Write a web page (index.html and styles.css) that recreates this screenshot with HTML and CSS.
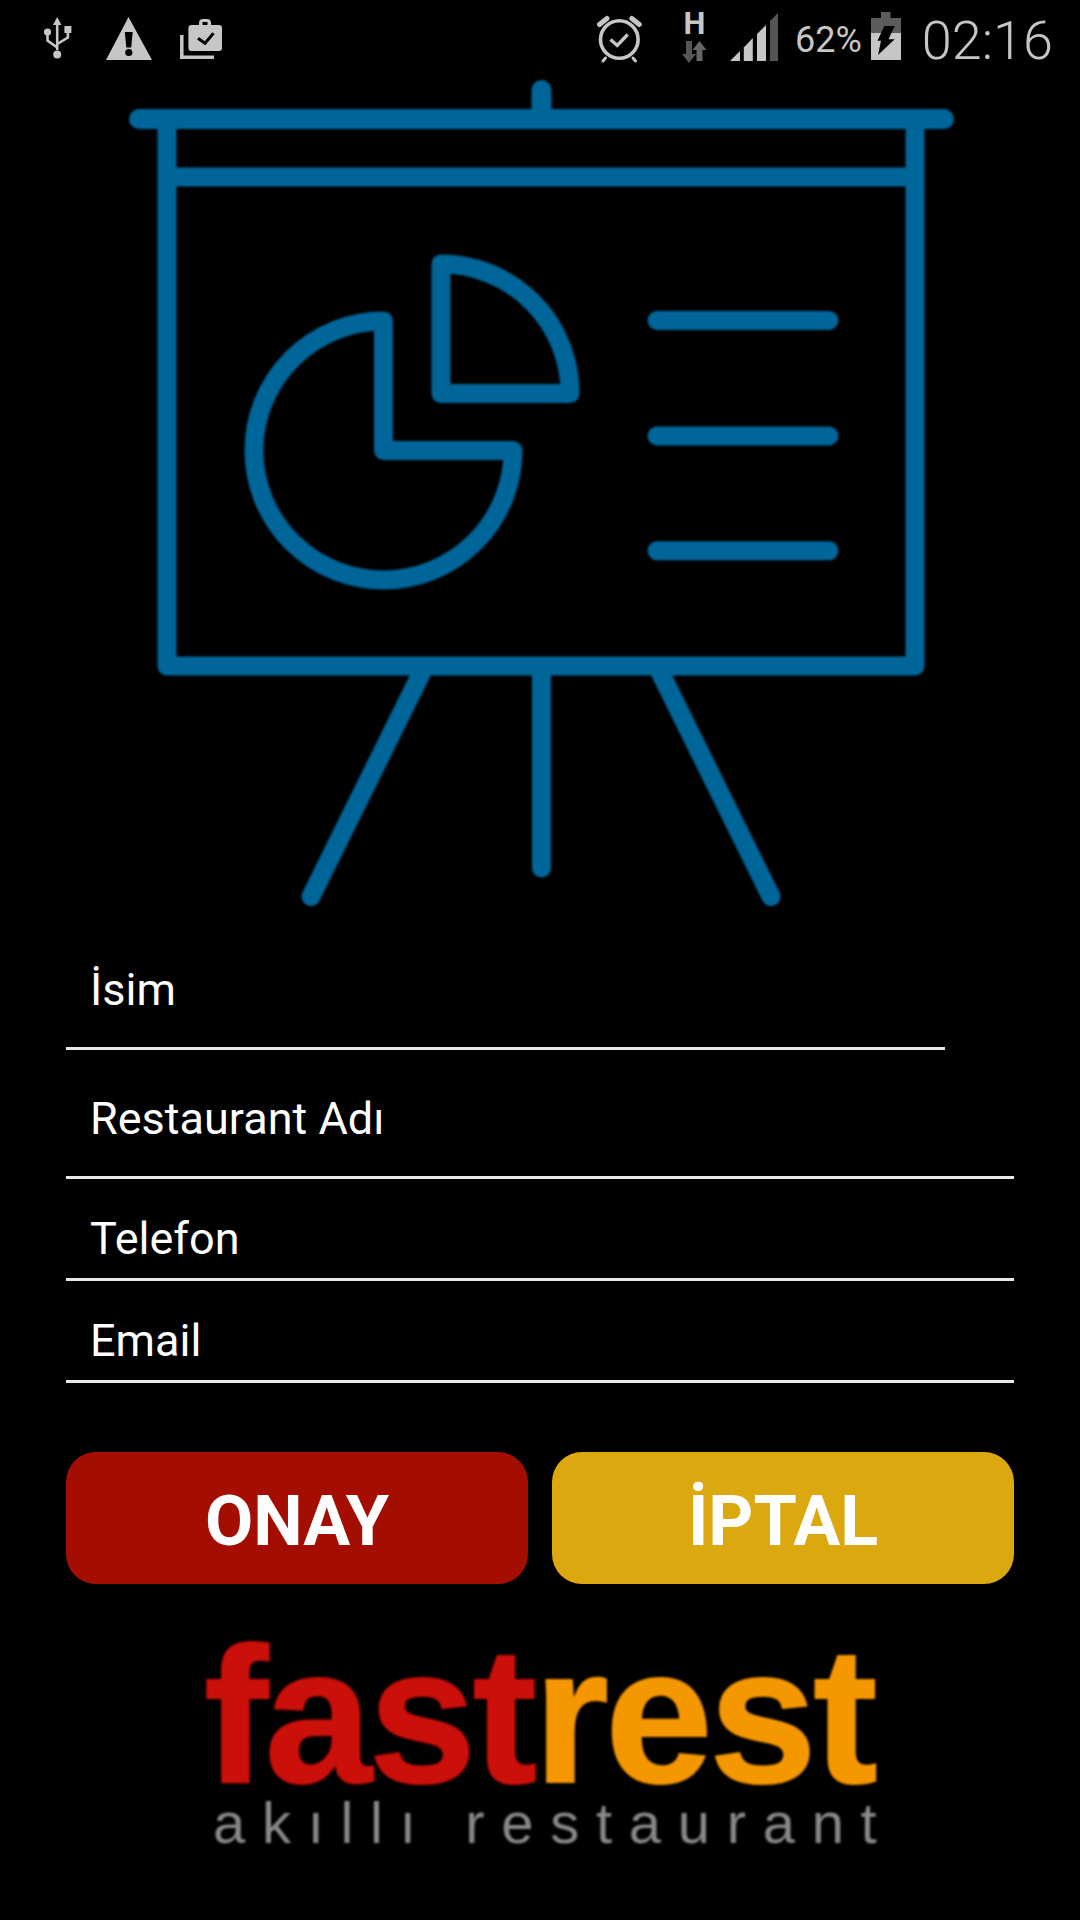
FILE: index.html
```html
<!DOCTYPE html>
<html lang="tr">
<head>
    <meta charset="UTF-8">
    <meta name="viewport" content="width=device-width, initial-scale=1.0">
    <title>fastrest</title>
    <link rel="stylesheet" href="styles.css">
</head>
<body>
    <div class="status-bar">
        <div class="status-group">
            <!-- usb -->
            <svg class="icon icon-usb" viewBox="44 0 28 78">
                <path d="M57.2 17l4.2 8h-2.9v25h-2.6V25H53z"/>
                <circle cx="57.2" cy="54.5" r="4"/>
                <circle cx="47.5" cy="32" r="3.6"/>
                <rect x="64.4" y="26" width="7" height="7"/>
                <path class="thin" d="M47.5 34v6.5l9.7 7M67.9 32v5.5l-10.7 6.5"/>
            </svg>
            <!-- warning -->
            <svg class="icon icon-warning" viewBox="106 0 46 78">
                <path d="M128.5 17L152 60H106z"/>
                <path class="cut" d="M124.8 32h7.9l-1.5 15.5h-4.9z"/>
                <circle class="cut" cx="128.8" cy="52.5" r="3.6"/>
            </svg>
            <!-- job bag -->
            <svg class="icon icon-bag" viewBox="180 0 42 78">
                <path d="M188.4 28a3 3 0 0 1 3-3h7.6v-2a4 4 0 0 1 4-4h4a4 4 0 0 1 4 4v2h8a3 3 0 0 1 3 3v20a3 3 0 0 1-3 3h-27.6a3 3 0 0 1-3-3z"/>
                <rect class="cut" x="202.5" y="22" width="5" height="3"/>
                <path class="check" d="M198 38.3l7 5 8.5-10"/>
                <path class="back" d="M181.8 35v22.2H214"/>
            </svg>
        </div>
        <div class="status-group status-right">
            <!-- alarm -->
            <svg class="icon icon-alarm" viewBox="597 0 45 78">
                <circle class="ring" cx="619.3" cy="39.5" r="18.8"/>
                <path class="ear" d="M599.5 24.5l7.5-6M639.3 24.5l-7.5-6"/>
                <path class="ear-thin" d="M605.5 58l-2.5 3M633 58l2.5 3"/>
                <path class="alarm-check" d="M610.5 39.5l6.7 6 10.5-11"/>
            </svg>
            <!-- network type -->
            <svg class="icon icon-net" viewBox="682 0 27 78">
                <text class="net-letter" x="683.5" y="34">H</text>
                <path class="arrow-down" d="M686 41h6v13h4l-7 9-7-9h4z"/>
                <path class="arrow-up" d="M699.5 41l7 9h-4v11h-6V50h-4z"/>
            </svg>
            <!-- signal -->
            <svg class="icon icon-signal" viewBox="730 0 48 78">
                <path d="M730 61l10-10v10z"/>
                <path d="M743.8 47.5l9-9.5v23h-9z"/>
                <path d="M757 34l9-9v36h-9z"/>
                <path class="signal-off" d="M770 21l8-8v48h-8z"/>
            </svg>
            <span class="battery-text">62%</span>
            <!-- battery charging -->
            <svg class="icon icon-battery" viewBox="871 0 30 78">
                <path class="battery-off" d="M881 12h9.5v6H901v15h-30V18h10z"/>
                <rect x="871" y="33" width="30" height="27"/>
                <path class="cut" d="M884.4 26h10.3l-6.2 13.3h6.2L878 55l3-14.3h-3.5z"/>
            </svg>
            <span class="clock">02:16</span>
        </div>
    </div>

    <!-- presentation board -->
    <svg class="board" viewBox="0 78 1080 842">
        <g class="board-lines">
            <path class="heavy" d="M139 119H944M541.5 90V119"/>
            <path d="M167 119V666H915V119M167 177H915"/>
            <path d="M383.5 321V450.5H513A129.5 129.5 0 1 1 383.5 321Z"/>
            <path d="M441 264V393.6H570A129 129 0 0 0 441 264Z"/>
            <path d="M657 320.4H829M657 435.9H829M657 550.8H829"/>
            <path d="M421 674L311 896.5M541.5 674V868M661 674L771 896.5"/>
        </g>
    </svg>

    <div class="form">
        <div class="field field-tall field-first"><span>İsim</span></div>
        <div class="field field-tall"><span>Restaurant Adı</span></div>
        <div class="field field-short"><span>Telefon</span></div>
        <div class="field field-short"><span>Email</span></div>

        <div class="actions">
            <button class="btn btn-ok">ONAY</button>
            <button class="btn btn-cancel">İPTAL</button>
        </div>
    </div>

    <div class="logo">
        <div class="logo-name"><span class="logo-fast">fast</span><span class="logo-rest">rest</span></div>
        <div class="logo-tag">akıllı restaurant</div>
    </div>
</body>
</html>
```

FILE: styles.css
```css
html, body {
    margin: 0;
    padding: 0;
}
body {
    width: 1080px;
    height: 1920px;
    overflow: hidden;
    background-color: #000;
    color: #fff;
    font-family: 'Roboto', sans-serif;
}

/* status bar */
.status-bar {
    display: flex;
    justify-content: space-between;
    height: 78px;
    padding: 0 27px 0 44px;
}
.status-group {
    display: flex;
    height: 78px;
}
.icon {
    display: block;
    height: 78px;
    flex: none;
    fill: #c6c6c6;
}
.icon-usb { width: 28px; }
.icon-warning { width: 46px; margin-left: 34px; }
.icon-bag { width: 42px; margin-left: 28px; }
.icon-alarm { width: 45px; }
.icon-net { width: 27px; margin-left: 40px; }
.icon-signal { width: 48px; margin-left: 21px; }
.icon-battery { width: 30px; margin-left: 9px; }
.cut { fill: #000; }
.thin { fill: none; stroke: #c6c6c6; stroke-width: 2.6; }
.check { fill: none; stroke: #000; stroke-width: 3; }
.back { fill: none; stroke: #c6c6c6; stroke-width: 3.5; }
.ring { fill: none; stroke: #c6c6c6; stroke-width: 3.6; }
.ear { fill: none; stroke: #c6c6c6; stroke-width: 5; stroke-linecap: round; }
.ear-thin { fill: none; stroke: #c6c6c6; stroke-width: 3; stroke-linecap: round; }
.alarm-check { fill: none; stroke: #c6c6c6; stroke-width: 3.4; }
.net-letter {
    font-family: 'Roboto', sans-serif;
    font-size: 31px;
    font-weight: 700;
    fill: #c6c6c6;
}
.arrow-down { fill: #555; }
.arrow-up { fill: #666; }
.signal-off { fill: #555; }
.battery-off { fill: #5c5c5c; }
.battery-text {
    margin-left: 17px;
    font-size: 36px;
    line-height: 80px;
    color: #c6c6c6;
}
.clock {
    margin-left: 21px;
    font-size: 54px;
    font-weight: 300;
    line-height: 82px;
    color: #c6c6c6;
}

/* board picture */
.board {
    display: block;
    width: 1080px;
    height: 842px;
    filter: blur(0.8px);
}
.board-lines {
    fill: none;
    stroke: #006598;
    stroke-width: 19;
    stroke-linecap: round;
    stroke-linejoin: round;
}
.board-lines .heavy {
    stroke-width: 20;
}

/* form */
.form {
    padding: 0 66px;
}
.field {
    display: flex;
    align-items: flex-end;
    box-sizing: border-box;
    padding-left: 24px;
    border-bottom: 3px solid #e8e8e8;
    font-size: 45px;
    line-height: 50px;
}
.field-tall {
    height: 129px;
    padding-bottom: 32px;
}
.field-short {
    height: 102px;
    padding-bottom: 14px;
}
.field-first {
    height: 130px;
    margin-right: 69px;
}
.actions {
    display: grid;
    grid-template-columns: 1fr 1fr;
    gap: 24px;
    margin-top: 69px;
}
.btn {
    height: 132px;
    padding: 6px 0 0;
    border: none;
    border-radius: 30px;
    color: #fff;
    font-family: 'Roboto', sans-serif;
    font-size: 70px;
    font-weight: 700;
}
.btn-ok {
    background-color: #a30e00;
}
.btn-cancel {
    background-color: #dca810;
}

/* logo */
.logo {
    margin-top: 66px;
    padding-left: 204px;
    font-family: 'Liberation Sans', Arial, sans-serif;
    white-space: nowrap;
    filter: blur(0.8px);
}
.logo-name {
    font-size: 193px;
    font-weight: 700;
    line-height: 130px;
    letter-spacing: -3.4px;
    -webkit-text-stroke: 2px;
}
.logo-fast {
    color: #cb0f0a;
}
.logo-rest {
    color: #f59700;
}
.logo-tag {
    margin-top: 13px;
    padding-left: 9px;
    font-size: 58px;
    line-height: 60px;
    letter-spacing: 16.7px;
    color: #888;
}
```
